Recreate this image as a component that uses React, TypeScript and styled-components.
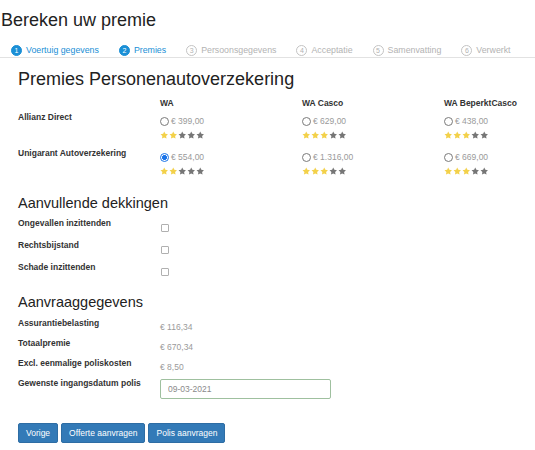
import React from "react";
import styled, { createGlobalStyle } from "styled-components";

const GlobalStyle = createGlobalStyle`
  html, body {
    margin: 0;
    padding: 0;
    background: #ffffff;
  }
  body {
    font-family: "Liberation Sans", Arial, sans-serif;
    color: #333333;
  }
  * { box-sizing: border-box; }
`;

const Page = styled.div`
  width: 535px;
  overflow: hidden;
`;

const Title = styled.h1`
  margin: 10px 0 0 1px;
  font-size: 18px;
  line-height: 20px;
  font-weight: normal;
  color: #222222;
`;

const StepBar = styled.ol`
  list-style: none;
  display: flex;
  gap: 20px;
  margin: 14px 0 0 0;
  padding: 0 0 1px 11px;
  border-bottom: 1px solid #e2e2e2;
`;

const Step = styled.li<{ $active: boolean }>`
  display: flex;
  align-items: center;
  gap: 4px;
  height: 12px;
  font-size: 8.8px;
  line-height: 12px;
  color: ${(p) => (p.$active ? "#1a8fd6" : "#b3b3b3")};
`;

const StepNum = styled.span<{ $active: boolean }>`
  display: flex;
  align-items: center;
  justify-content: center;
  width: 11px;
  height: 11px;
  border-radius: 50%;
  font-size: 7px;
  line-height: 1;
  background: ${(p) => (p.$active ? "#1a8fd6" : "#ffffff")};
  color: ${(p) => (p.$active ? "#ffffff" : "#b3b3b3")};
  border: 1px solid ${(p) => (p.$active ? "#1a8fd6" : "#c4c4c4")};
`;

const Content = styled.div`
  padding: 0 0 0 18px;
`;

const SectionTitle = styled.h2<{ $size: number; $top: number }>`
  margin: ${(p) => p.$top}px 0 0 0;
  font-size: ${(p) => p.$size}px;
  line-height: ${(p) => Math.round(p.$size * 1.15)}px;
  font-weight: normal;
  color: #222222;
`;

const PremiumGrid = styled.div`
  display: grid;
  grid-template-columns: 142px 142px 142px 1fr;
  margin-top: 7px;
`;

const ColHead = styled.div`
  font-size: 8.5px;
  line-height: 12px;
  font-weight: bold;
  color: #333333;
  white-space: nowrap;
`;

const RowLabel = styled.div<{ $pad: number }>`
  padding-top: ${(p) => p.$pad}px;
  font-size: 8.5px;
  line-height: 12px;
  font-weight: bold;
  color: #333333;
  white-space: nowrap;
`;

const OptionCell = styled.div`
  display: flex;
  flex-direction: column;
  gap: 2px;
  padding: 6px 0 4px 0;
`;

const OptionLine = styled.label`
  display: flex;
  align-items: center;
  gap: 2px;
  height: 12px;
  font-size: 8.5px;
  color: #9a9a9a;
  white-space: nowrap;
`;

const Radio = styled.input.attrs({ type: "radio" })`
  appearance: none;
  -webkit-appearance: none;
  margin: 0;
  width: 9px;
  height: 9px;
  border-radius: 50%;
  border: 1px solid #7a7a7a;
  background: #ffffff;
  &:checked {
    border-color: #1a73e8;
    background: radial-gradient(circle, #1a73e8 0 2.2px, #ffffff 2.6px);
  }
`;

const Stars = styled.div`
  display: flex;
  align-items: center;
  gap: 0.5px;
  height: 12px;
`;

const StarIcon = styled.svg`
  width: 8.5px;
  height: 8.5px;
  display: block;
`;

const CheckGrid = styled.div`
  display: grid;
  grid-template-columns: 142px 1fr;
  grid-auto-rows: 22px;
  margin-top: 1px;
`;

const Checkbox = styled.input.attrs({ type: "checkbox" })`
  appearance: none;
  -webkit-appearance: none;
  margin: 11px 0 0 1px;
  width: 8px;
  height: 8px;
  border: 1px solid #b0b0b0;
  border-radius: 1px;
  background: #ffffff;
`;

const DataGrid = styled.div`
  display: grid;
  grid-template-columns: 142px 1fr;
  margin-top: 2px;
`;

const Value = styled.div`
  padding-top: 8px;
  font-size: 8.5px;
  line-height: 12px;
  color: #9a9a9a;
  white-space: nowrap;
`;

const DateInput = styled.input`
  margin-top: 6px;
  width: 171px;
  height: 20px;
  padding: 0 7px;
  border: 1px solid #9fc09f;
  border-radius: 2px;
  font-family: "Liberation Sans", Arial, sans-serif;
  font-size: 8.5px;
  color: #8a8a8a;
  outline: none;
`;

const ButtonRow = styled.div`
  display: flex;
  gap: 3px;
  margin-top: 24px;
`;

const Button = styled.button`
  height: 20px;
  padding: 0 7px;
  border: 1px solid #2e6da4;
  border-radius: 2px;
  background: #337ab7;
  color: #ffffff;
  font-family: "Liberation Sans", Arial, sans-serif;
  font-size: 8.5px;
  line-height: 18px;
  cursor: pointer;
`;

const Star = ({ on }: { on: boolean }) => (
  <StarIcon viewBox="0 0 24 24">
    <path
      d="M12 1.5l3.2 6.6 7.3 1-5.3 5.1 1.3 7.2L12 18l-6.5 3.4 1.3-7.2L1.5 9.1l7.3-1z"
      fill={on ? "#f3d14a" : "#767676"}
    />
  </StarIcon>
);

const steps = [
  { n: 1, label: "Voertuig gegevens", active: true },
  { n: 2, label: "Premies", active: true },
  { n: 3, label: "Persoonsgegevens", active: false },
  { n: 4, label: "Acceptatie", active: false },
  { n: 5, label: "Samenvatting", active: false },
  { n: 6, label: "Verwerkt", active: false },
];

const columns = ["WA", "WA Casco", "WA BeperktCasco"];

const insurers = [
  {
    name: "Allianz Direct",
    options: [
      { price: "€ 399,00", stars: 2, checked: false },
      { price: "€ 629,00", stars: 3, checked: false },
      { price: "€ 438,00", stars: 3, checked: false },
    ],
  },
  {
    name: "Unigarant Autoverzekering",
    options: [
      { price: "€ 554,00", stars: 2, checked: true },
      { price: "€ 1.316,00", stars: 3, checked: false },
      { price: "€ 669,00", stars: 3, checked: false },
    ],
  },
];

const extras = ["Ongevallen inzittenden", "Rechtsbijstand", "Schade inzittenden"];

const details = [
  { label: "Assurantiebelasting", value: "€ 116,34" },
  { label: "Totaalpremie", value: "€ 670,34" },
  { label: "Excl. eenmalige poliskosten", value: "€ 8,50" },
];

export default function App() {
  return (
    <Page>
      <GlobalStyle />
      <Title>Bereken uw premie</Title>
      <StepBar>
        {steps.map((s) => (
          <Step key={s.n} $active={s.active}>
            <StepNum $active={s.active}>{s.n}</StepNum>
            {s.label}
          </Step>
        ))}
      </StepBar>
      <Content>
        <SectionTitle $size={18} $top={11}>
          Premies Personenautoverzekering
        </SectionTitle>
        <PremiumGrid>
          <div />
          {columns.map((c) => (
            <ColHead key={c}>{c}</ColHead>
          ))}
          {insurers.map((ins) => (
            <React.Fragment key={ins.name}>
              <RowLabel $pad={2}>{ins.name}</RowLabel>
              {ins.options.map((o, j) => (
                <OptionCell key={j}>
                  <OptionLine>
                    <Radio name="premie" defaultChecked={o.checked} />
                    {o.price}
                  </OptionLine>
                  <Stars>
                    {[0, 1, 2, 3, 4].map((k) => (
                      <Star key={k} on={k < o.stars} />
                    ))}
                  </Stars>
                </OptionCell>
              ))}
            </React.Fragment>
          ))}
        </PremiumGrid>

        <SectionTitle $size={14.5} $top={14}>
          Aanvullende dekkingen
        </SectionTitle>
        <CheckGrid>
          {extras.map((e) => (
            <React.Fragment key={e}>
              <RowLabel $pad={4}>{e}</RowLabel>
              <div>
                <Checkbox />
              </div>
            </React.Fragment>
          ))}
        </CheckGrid>

        <SectionTitle $size={14.5} $top={15}>
          Aanvraaggegevens
        </SectionTitle>
        <DataGrid>
          {details.map((d) => (
            <React.Fragment key={d.label}>
              <RowLabel $pad={4}>{d.label}</RowLabel>
              <Value>{d.value}</Value>
            </React.Fragment>
          ))}
          <RowLabel $pad={4}>Gewenste ingangsdatum polis</RowLabel>
          <div>
            <DateInput defaultValue="09-03-2021" />
          </div>
        </DataGrid>

        <ButtonRow>
          <Button>Vorige</Button>
          <Button>Offerte aanvragen</Button>
          <Button>Polis aanvragen</Button>
        </ButtonRow>
      </Content>
    </Page>
  );
}
